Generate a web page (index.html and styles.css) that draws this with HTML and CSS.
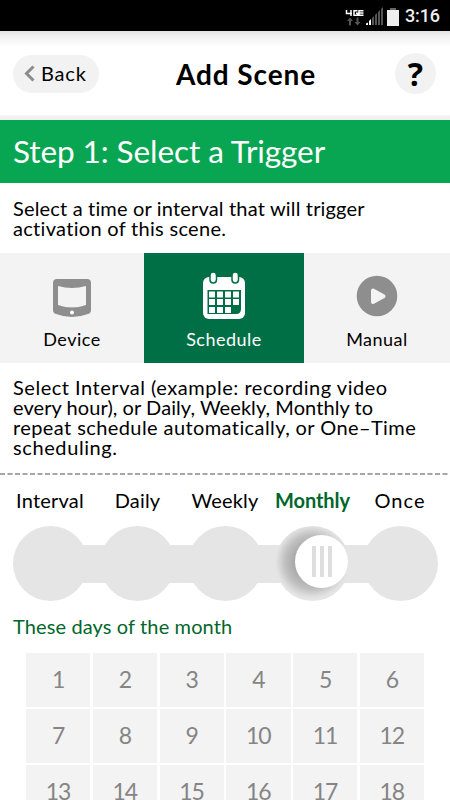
FILE: index.html
```html
<!DOCTYPE html>
<html lang="en">
<head>
<meta charset="utf-8">
<title>Add Scene</title>
<link rel="stylesheet" href="styles.css">
</head>
<body>
<div class="status">
  <svg class="signal" width="56" height="28" viewBox="0 0 56 28">
    <g fill="none" stroke="#fff" stroke-width="1.5"><path d="M2.500 9v3.500h5.500M7 9v6M13.500 9.700H10v4.500h3.500v-2H12M19.500 9.700H15v4.500h4.500M15 12h4.500"/></g>
    <path d="M3 20l3-3.500L9 20H7v4.500H5V20zM10.500 21h2v-4.500h2V21h2l-3 3.500z" fill="#555"/>
    <path d="M22 24v-1.500l2-1V24zM25 24v-4l2-2v6z" fill="#fff"/>
    <path d="M28 24v-7l2-2v9zM31 24V14l2-2v12zM34 24V11l2-2v15zM37 24V8l2-2v18z" fill="#555"/>
    <path d="M43 9h12v16H43z" fill="#eee"/><path d="M46 7h6v2h-6z" fill="#666"/>
  </svg>
  <span class="clock">3:16</span>
</div>
<header class="header">
  <div class="back"><svg width="12" height="18" viewBox="0 0 12 18"><path d="M9.500 2.500L2.500 9.500l7 7" fill="none" stroke="#8c8c8c" stroke-width="3"/></svg><span>Back</span></div>
  <h1>Add Scene</h1>
  <div class="help">?</div>
</header>
<h2 class="step"><span>Step 1: Select a Trigger</span></h2>
<p class="intro"><span class="i1">Select a time or interval that will trigger</span><br><span class="i2">activation of this scene.</span></p>
<nav class="tabs">
  <div class="tab">
    <svg width="48" height="52" viewBox="0 0 48 52"><path d="M9 9h30q4 0 4 4v27q0 3-3 4-16 6-32 0-3-1-3-4V13q0-4 4-4z" fill="#8e8e8e"/><path d="M10 16q14 4 28 0v19q-14 5-28 0z" fill="#f3f3f3"/><circle cx="24" cy="42.500" r="2" fill="#fff"/></svg>
    <span>Device</span>
  </div>
  <div class="tab active">
    <svg width="48" height="52" viewBox="0 0 48 52"><rect x="3" y="7" width="42" height="42" rx="6" fill="#fff"/><g fill="#fff" stroke="#006f45" stroke-width="1.500"><rect x="10" y="2" width="6.500" height="11" rx="3.200"/><rect x="32" y="2" width="6.500" height="11" rx="3.200"/></g><path d="M7.500 20h33.500v19q0 5-5 5H7.500z" fill="#006f45"/><path d="M9 21.500h6v6H9zm8 0h6v6h-6zm8 0h6v6h-6zm8 0h6v6h-6zM9 29h6v6H9zm8 0h6v6h-6zm8 0h6v6h-6zm8 0h6v6h-6zM9 37h6v6H9zm8 0h6v6h-6zm8 0h6v6h-6z" fill="#fff"/></svg>
    <span>Schedule</span>
  </div>
  <div class="tab">
    <svg width="48" height="52" viewBox="0 0 48 52"><circle cx="24" cy="26" r="20.300" fill="#8e8e8e"/><path d="M20 20.500l10.500 5.700L20 32z" fill="#f3f3f3" stroke="#f3f3f3" stroke-width="4" stroke-linejoin="round"/></svg>
    <span>Manual</span>
  </div>
</nav>
<p class="detail"><span class="d1">Select Interval (example: recording video</span><br><span class="d2">every hour), or Daily, Weekly, Monthly to</span><br><span class="d3">repeat schedule automatically, or One–Time</span><br><span class="d4">scheduling.</span></p>
<svg class="rule" width="450" height="2"><path d="M0 1h450" stroke="#8a8a8a" stroke-width="1.500" stroke-dasharray="5 2.500"/></svg>
<div class="labels"><span>Interval</span><span>Daily</span><span>Weekly</span><span class="on">Monthly</span><span class="once">Once</span></div>
<div class="slider">
  <i></i><i></i><i></i><i class="stop"></i><i></i>
  <b class="thumb"><s></s><s></s><s></s></b>
</div>
<h3 class="days-title"><span>These days of the month</span></h3>
<div class="days">
  <span>1</span><span>2</span><span>3</span><span>4</span><span>5</span><span>6</span>
  <span>7</span><span>8</span><span>9</span><span>10</span><span>11</span><span>12</span>
  <span>13</span><span>14</span><span>15</span><span>16</span><span>17</span><span>18</span>
</div>
</body>
</html>
```

FILE: styles.css
```css
* { box-sizing: border-box; }
body { margin: 0; width: 450px; height: 800px; overflow: hidden; background: #fff; color: #000; font-family: Lato, sans-serif; font-size: 20px; font-variant-ligatures: none; }
h1, h2, h3, p { margin: 0; font-weight: 400; }
svg { display: block; flex: none; }
.status { height: 31px; background: #000; color: #eee; display: flex; align-items: center; justify-content: flex-end; padding-right: 10px; }
.signal { margin: 0 5px 2px 0; }
.clock { font: 500 18px/32px Roboto, sans-serif; letter-spacing: -.1px; }
.header { height: 89px; padding: 0 14px 4px 13px; display: flex; align-items: center; justify-content: space-between; background: linear-gradient(#e2e2e2, #f2f2f2 6px, #fff 16px, #fff 84px, #f2f0f0 85px); }
.back { width: 86px; height: 38px; border-radius: 19px; background: #f2f2f2; display: flex; align-items: center; padding: 0 0 1px 11px; gap: 5px; letter-spacing: .8px; }
h1 { font-size: 28px; font-weight: 700; letter-spacing: .9px; padding-right: 2px; }
.help { width: 41px; height: 41px; border-radius: 50%; background: #f2f2f2; font: 700 32px/41px "Open Sans", sans-serif; text-align: center; }
.step { height: 63px; background: #08a652; color: #fff; font-size: 31.5px; line-height: 63px; padding-left: 13px; white-space: nowrap; letter-spacing: -.07px; }
.intro { height: 70px; padding: 15px 0 0 13px; line-height: 20px; white-space: nowrap; }
.i1 { letter-spacing: .17px; }
.i2 { letter-spacing: .3px; }
.tabs { height: 110px; display: grid; grid-template-columns: 144px 160px 146px; background: #f3f3f3; }
.tab { display: flex; flex-direction: column; align-items: center; padding-top: 17px; font-size: 18px; line-height: 24px; letter-spacing: .5px; gap: 5px; }
.active { background: #006f45; color: #fff; }
.detail { height: 110px; padding: 14px 0 0 13px; line-height: 20px; white-space: nowrap; }
.d1 { letter-spacing: .52px; }
.d2 { letter-spacing: .07px; }
.d3 { letter-spacing: .41px; }
.d4 { letter-spacing: .6px; }
.labels { height: 51px; padding-top: 12px; display: grid; grid-template-columns: 100px 75px 100px 75px 100px; line-height: 27px; text-align: center; }
.labels span { justify-self: center; letter-spacing: .2px; }
.labels .on { color: #00662b; font-weight: 700; letter-spacing: -.1px; }
.labels .once { letter-spacing: 1px; }
.slider { height: 75px; position: relative; display: flex; justify-content: space-between; padding: 0 12.5px; background: linear-gradient(#e5e5e5, #e5e5e5) center / 350px 38px no-repeat; }
.slider i { width: 75px; height: 75px; border-radius: 50%; background: #e5e5e5; }
.slider .stop { background: radial-gradient(circle at 37px 36px, #999 0, #aaa 18px, #c0c0c0 27px, #dcdcdc 34px, #e5e5e5 37px); }
.thumb { position: absolute; left: 295px; top: 9px; width: 53px; height: 53px; border-radius: 50%; background: #fff; display: flex; align-items: center; justify-content: center; gap: 4px; }
.thumb s { width: 4px; height: 31px; background: #dedede; }
.days-title { height: 50px; line-height: 50px; font-size: 20px; color: #00662b; padding-left: 13px; white-space: nowrap; letter-spacing: .12px; }
.days { width: 398px; margin: 2px 0 0 26px; display: grid; grid-template-columns: repeat(6, 1fr); grid-auto-rows: 54px; gap: 2px 2.500px; }
.days span { background: #f3f3f3; color: #858585; font-size: 23px; line-height: 53px; text-align: center; letter-spacing: -1px; }
```
